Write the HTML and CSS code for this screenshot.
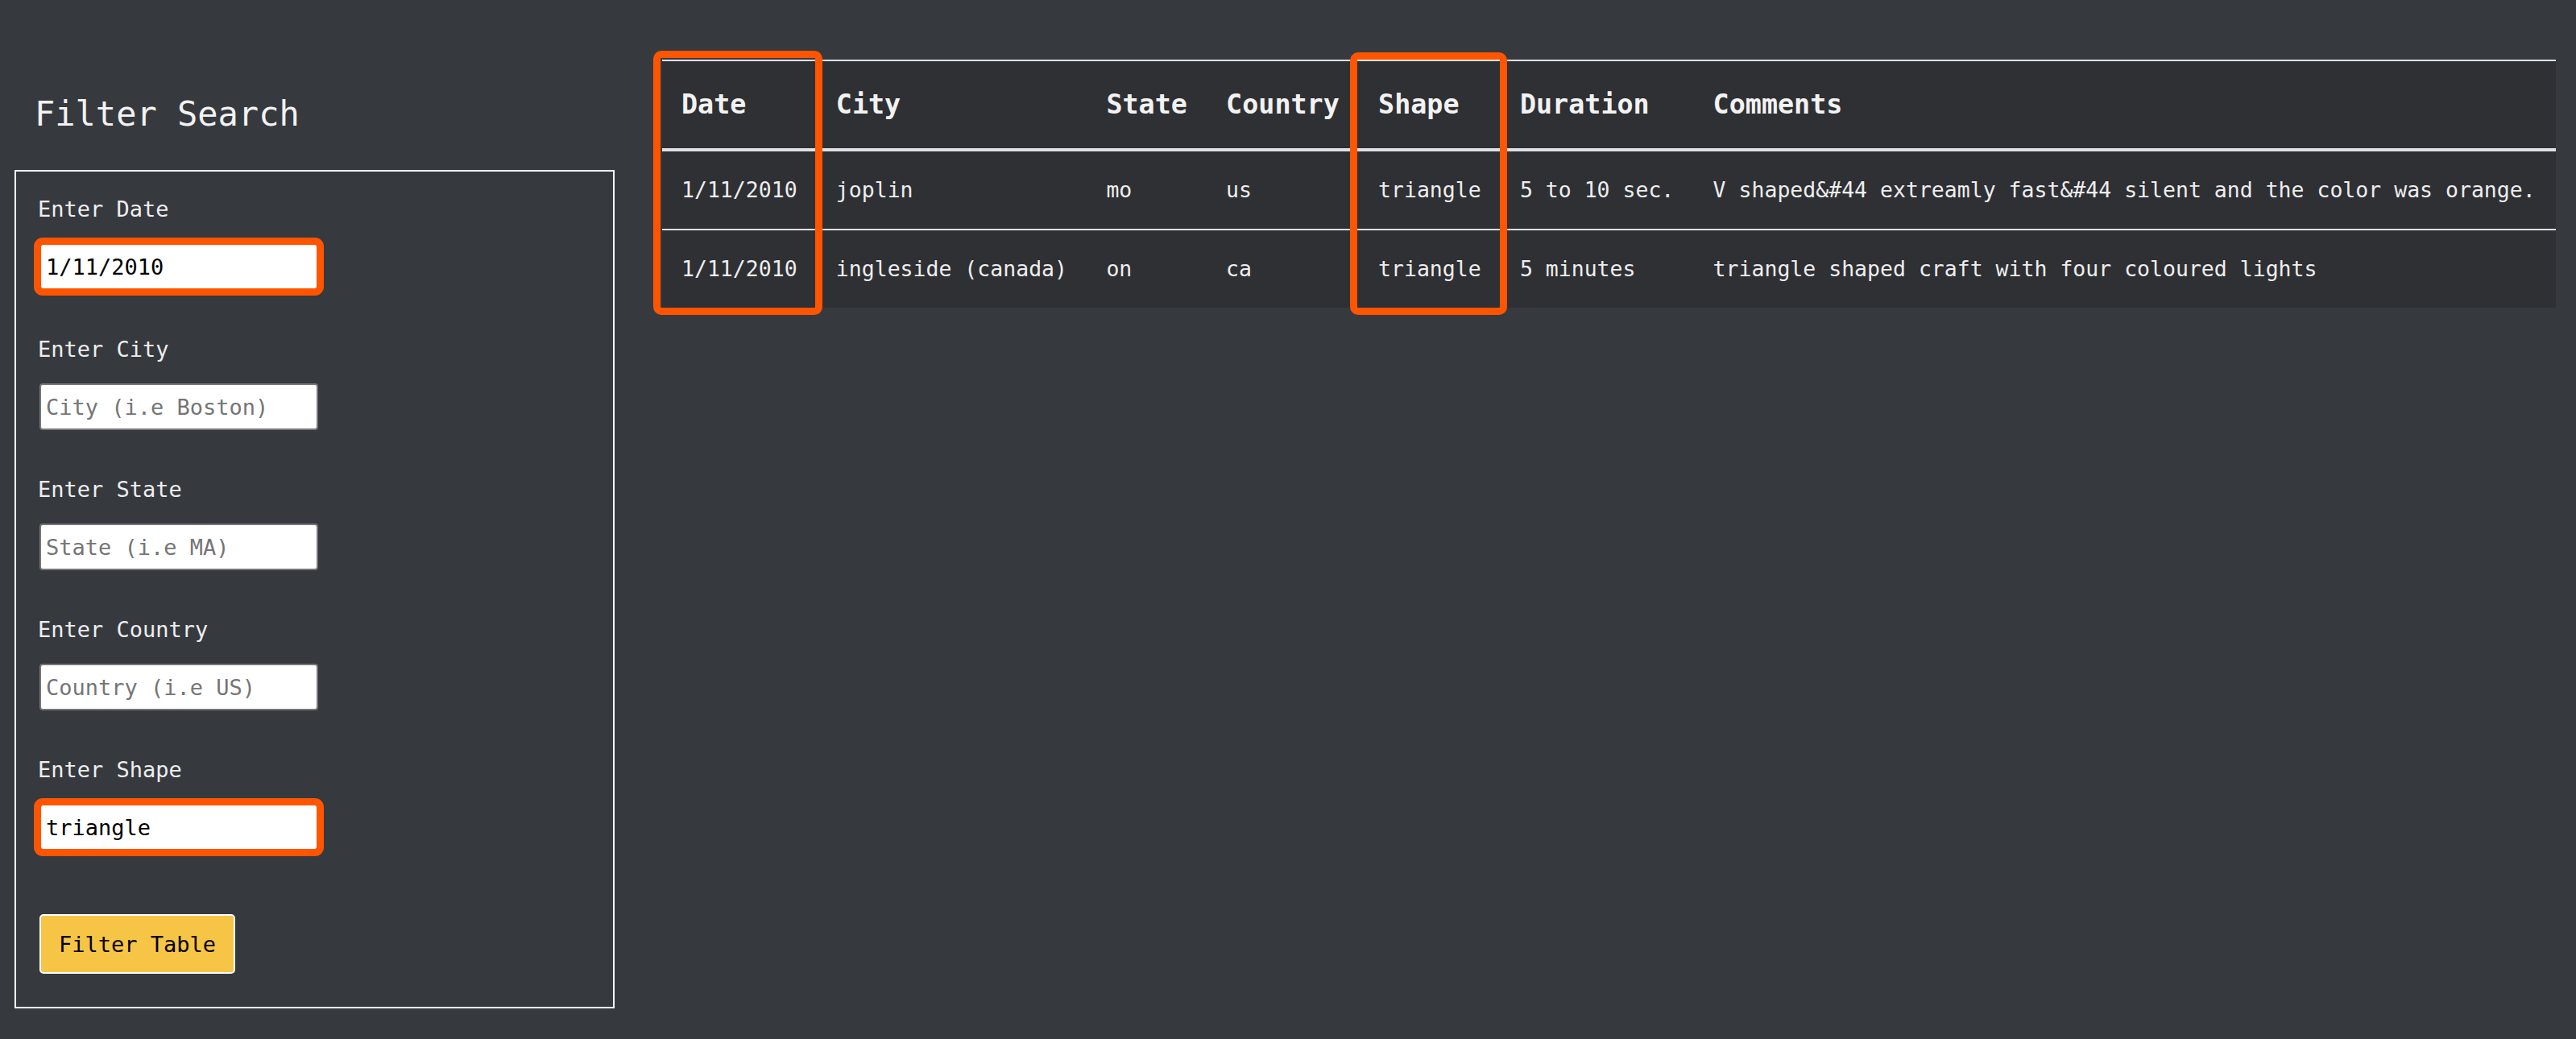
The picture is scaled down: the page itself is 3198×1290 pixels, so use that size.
FILE: index.html
```html
<!DOCTYPE html>
<html lang="en">
<head>
<meta charset="utf-8">
<title>UFO Sightings</title>
<link rel="stylesheet" href="styles.css">
</head>
<body>
<div class="page">
  <aside class="sidebar">
    <h2 class="title">Filter Search</h2>
    <form class="panel">
      <label class="label" for="date">Enter Date</label>
      <input class="field hl" id="date" type="text" value="1/11/2010" placeholder="mm/dd/yyyy">
      <label class="label" for="city">Enter City</label>
      <input class="field" id="city" type="text" placeholder="City (i.e Boston)">
      <label class="label" for="state">Enter State</label>
      <input class="field" id="state" type="text" placeholder="State (i.e MA)">
      <label class="label" for="country">Enter Country</label>
      <input class="field" id="country" type="text" placeholder="Country (i.e US)">
      <label class="label" for="shape">Enter Shape</label>
      <input class="field hl" id="shape" type="text" value="triangle" placeholder="Shape">
      <button class="btn" type="button">Filter Table</button>
    </form>
  </aside>
  <main class="main">
    <div class="table-wrap">
      <table class="ufo">
        <thead>
          <tr>
            <th>Date</th><th>City</th><th>State</th><th>Country</th><th>Shape</th><th>Duration</th><th>Comments</th>
          </tr>
        </thead>
        <tbody>
          <tr>
            <td>1/11/2010</td><td>joplin</td><td>mo</td><td>us</td><td>triangle</td><td>5 to 10 sec.</td><td>V shaped&amp;#44 extreamly fast&amp;#44 silent and the color was orange.</td>
          </tr>
          <tr class="next">
            <td>1/11/2010</td><td>ingleside (canada)</td><td>on</td><td>ca</td><td>triangle</td><td>5 minutes</td><td>triangle shaped craft with four coloured lights</td>
          </tr>
        </tbody>
      </table>
      <div class="mark mark-date"></div>
      <div class="mark mark-shape"></div>
    </div>
  </main>
</div>
</body>
</html>
```

FILE: styles.css
```css
html, body {
  margin: 0;
  padding: 0;
}

body {
  background: #363a3f;
  color: #eeeeee;
  font-family: "DejaVu Sans Mono", "Liberation Mono", monospace;
  width: 3198px;
  height: 1290px;
  overflow: hidden;
}

.page {
  display: flex;
  align-items: flex-start;
  padding: 0 25px 0 18px;
}

.sidebar {
  flex: none;
  width: 745px;
  padding-top: 117px;
}

.title {
  margin: 0 0 44px 0;
  padding-left: 25px;
  font-size: 42px;
  line-height: 50px;
  font-weight: normal;
  color: #f2f2f2;
}

.panel {
  display: flex;
  flex-direction: column;
  align-items: flex-start;
  border: 2px solid #ffffff;
  padding: 27px 27px 41px 27px;
  margin: 0;
}

.label {
  display: block;
  font-size: 27px;
  line-height: 40px;
  margin: 0 0 22px 0;
  color: #eeeeee;
}

.field {
  box-sizing: border-box;
  display: block;
  width: 346px;
  height: 58px;
  margin: 0 0 54px 2px;
  padding: 0 6px;
  border: 2px solid #767676;
  border-radius: 4px;
  background: #ffffff;
  color: #000000;
  font-family: "DejaVu Sans Mono", "Liberation Mono", monospace;
  font-size: 27px;
}

.field::placeholder {
  color: #757575;
}

.hl {
  outline: 9px solid #ff5500;
  outline-offset: -2px;
}

.btn {
  box-sizing: border-box;
  width: 243px;
  height: 74px;
  margin: 25px 0 0 2px;
  padding: 0;
  background: #f7c545;
  border: 2px solid #ffffff;
  border-radius: 5px;
  color: #000000;
  font-family: "DejaVu Sans Mono", "Liberation Mono", monospace;
  font-size: 27px;
}

.main {
  flex: 1;
  margin-left: 59px;
  padding-top: 74px;
}

.table-wrap {
  position: relative;
}

.ufo {
  width: 100%;
  border-collapse: separate;
  border-spacing: 0;
  background: #2f3034;
  color: #eeeeee;
}

.ufo th {
  text-align: left;
  padding: 24px;
  font-size: 33.4px;
  line-height: 60px;
  font-weight: bold;
  white-space: nowrap;
  border-top: 2px solid #dee2e6;
  border-bottom: 4px solid #dee2e6;
  color: #f2f2f2;
}

.ufo td {
  text-align: left;
  padding: 24px;
  font-size: 26.5px;
  line-height: 48px;
  white-space: nowrap;
}

.ufo tr.next td {
  border-top: 2px solid #dee2e6;
}

.mark {
  position: absolute;
  box-sizing: border-box;
  border: 9px solid #ff5500;
  border-radius: 10px;
  pointer-events: none;
}

.mark-date {
  left: -11px;
  top: -11px;
  width: 210px;
  height: 328px;
}

.mark-shape {
  left: 854px;
  top: -9px;
  width: 195px;
  height: 326px;
}
```
